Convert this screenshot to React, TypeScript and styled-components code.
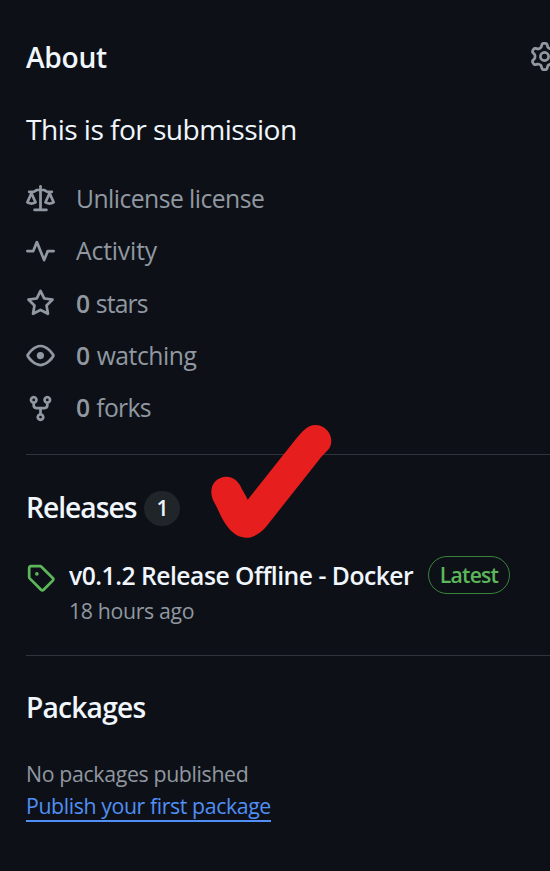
import React from 'react';
import styled, { createGlobalStyle } from 'styled-components';

const color = {
  bg: '#0d1117',
  text: '#f0f6fc',
  muted: '#9198a1',
  line: '#30353d',
  green: '#5cb75a',
  greenBorder: '#3a833c',
  link: '#508ff6',
  counter: '#1f2528',
  red: '#e61e1e',
};

const GlobalStyle = createGlobalStyle`
  *, *::before, *::after { box-sizing: border-box; }
  body {
    margin: 0;
    overflow: hidden;
    background: ${color.bg};
    color: ${color.text};
    font-family: 'Open Sans', 'Noto Sans', sans-serif;
  }
  h2, p, ul { margin: 0; padding: 0; }
`;

const Sidebar = styled.aside`
  position: relative;
  width: 550px;
  height: 871px;
  padding-left: 26px;
  overflow: hidden;
  background: ${color.bg};
`;

const Section = styled.section<{ $height: number; $top: number }>`
  height: ${({ $height }) => $height}px;
  padding-top: ${({ $top }) => $top}px;
  border-bottom: 1px solid ${color.line};

  &:last-of-type { border-bottom: 0; }
`;

const HeadingRow = styled.div`
  display: flex;
  align-items: center;
  height: 40px;
`;

const Heading = styled.h2<{ $spacing: number }>`
  font-size: 28.2px;
  font-weight: 600;
  line-height: 40px;
  letter-spacing: ${({ $spacing }) => $spacing}px;
  white-space: nowrap;
`;

const Icon = styled.svg`
  display: block;
  flex: none;
  width: 29px;
  height: 29px;
  fill: currentColor;
`;

const SettingsButton = styled.a`
  flex: none;
  margin: -1px -9px 0 auto;
  color: ${color.muted};
`;

const Description = styled.p`
  margin-top: 32px;
  font-size: 28.2px;
  line-height: 40px;
  letter-spacing: -0.57px;
`;

const MetaList = styled.ul`
  display: grid;
  grid-auto-rows: 52.25px;
  margin-top: 24px;
  list-style: none;
`;

const MetaItem = styled.li<{ $spacing: number }>`
  display: flex;
  align-items: center;
  gap: 21px;
  color: ${color.muted};
  font-size: 24.7px;
  line-height: 36px;
  letter-spacing: ${({ $spacing }) => $spacing}px;

  strong { margin-right: 1px; font-weight: 600; }
`;

const Counter = styled.span`
  display: grid;
  place-items: center;
  width: 36px;
  height: 35px;
  margin: 2px 0 0 8px;
  border-radius: 18px;
  background: ${color.counter};
  font-size: 21px;
  font-weight: 600;
  line-height: 34px;
`;

const Release = styled.div`
  display: grid;
  grid-template-columns: 29px 1fr;
  column-gap: 14px;
  margin-top: 29px;
`;

const TagIcon = styled(Icon)`
  margin-top: 7px;
  color: ${color.green};
`;

const ReleaseTitle = styled.div`
  display: flex;
  align-items: center;
  height: 38px;
  margin-bottom: 1px;
`;

const ReleaseName = styled.span`
  width: 359px;
  padding-top: 1px;
  font-size: 24.7px;
  font-weight: 600;
  line-height: 36px;
  letter-spacing: -0.5px;
  white-space: nowrap;
`;

const LatestLabel = styled.span`
  display: grid;
  place-items: center;
  width: 82px;
  height: 38px;
  padding-bottom: 2px;
  border: 1px solid ${color.greenBorder};
  border-radius: 19px;
  color: ${color.green};
  font-size: 21.2px;
  font-weight: 600;
  letter-spacing: -0.8px;
`;

const SmallText = styled.p<{ $spacing: number }>`
  color: ${color.muted};
  font-size: 21.3px;
  line-height: 32px;
  letter-spacing: ${({ $spacing }) => $spacing}px;
`;

const PackageInfo = styled.div`
  margin-top: 31px;
`;

const PublishLink = styled.a`
  display: block;
  width: 245px;
  height: 32px;
  border-bottom: 2px solid ${color.link};
  color: ${color.link};
  font-size: 21.3px;
  line-height: 32px;
  letter-spacing: -0.4px;
  white-space: nowrap;
`;

const CheckMark = styled.svg`
  position: absolute;
  left: 210px;
  top: 424px;
  width: 123px;
  height: 115px;
  fill: ${color.red};
`;

const paths = {
  gear: 'M8 0a8.2 8.2 0 0 1 .701.031C9.444.095 9.99.645 10.16 1.29l.288 1.107c.018.066.079.158.212.224.231.114.454.243.668.386.123.082.233.09.299.071l1.103-.303c.644-.176 1.392.021 1.82.63.27.385.506.792.704 1.218.315.675.111 1.422-.364 1.891l-.814.806c-.049.048-.098.147-.088.294.016.257.016.515 0 .772-.01.147.038.246.088.294l.814.806c.475.469.679 1.216.364 1.891a7.977 7.977 0 0 1-.704 1.217c-.428.61-1.176.807-1.82.63l-1.102-.302c-.067-.019-.177-.011-.3.071a5.909 5.909 0 0 1-.668.386c-.133.066-.194.158-.211.224l-.29 1.106c-.168.646-.715 1.196-1.458 1.26a8.006 8.006 0 0 1-1.402 0c-.743-.064-1.289-.614-1.458-1.26l-.289-1.106c-.018-.066-.079-.158-.212-.224a5.738 5.738 0 0 1-.668-.386c-.123-.082-.233-.09-.299-.071l-1.103.303c-.644.176-1.392-.021-1.82-.63a8.12 8.12 0 0 1-.704-1.218c-.315-.675-.111-1.422.363-1.891l.815-.806c.05-.048.098-.147.088-.294a6.214 6.214 0 0 1 0-.772c.01-.147-.038-.246-.088-.294l-.815-.806C.635 6.045.431 5.298.746 4.623a7.92 7.92 0 0 1 .704-1.217c.428-.61 1.176-.807 1.82-.63l1.102.302c.067.019.177.011.3-.071.214-.143.437-.272.668-.386.133-.066.194-.158.211-.224l.29-1.106C6.009.645 6.556.095 7.299.03 7.53.01 7.764 0 8 0Zm-.571 1.525c-.036.003-.108.036-.137.146l-.289 1.105c-.147.561-.549.967-.998 1.189-.173.086-.34.183-.5.29-.417.278-.97.423-1.529.27l-1.103-.303c-.109-.03-.175.016-.195.045-.22.312-.412.644-.573.99-.014.031-.021.11.059.19l.815.806c.411.406.562.957.53 1.456a4.709 4.709 0 0 0 0 .582c.032.499-.119 1.05-.53 1.456l-.815.806c-.081.08-.073.159-.059.19.162.346.353.677.573.989.02.03.085.076.195.046l1.102-.303c.56-.153 1.113-.008 1.53.27.161.107.328.204.501.29.447.222.85.629.997 1.189l.289 1.105c.029.109.101.143.137.146a6.6 6.6 0 0 0 1.142 0c.036-.003.108-.036.137-.146l.289-1.105c.147-.561.549-.967.998-1.189.173-.086.34-.183.5-.29.417-.278.97-.423 1.529-.27l1.103.303c.109.029.175-.016.195-.045.22-.313.411-.644.573-.99.014-.031.021-.11-.059-.19l-.815-.806c-.411-.406-.562-.957-.53-1.456a4.709 4.709 0 0 0 0-.582c-.032-.499.119-1.05.53-1.456l.815-.806c.081-.08.073-.159.059-.19a6.464 6.464 0 0 0-.573-.989c-.02-.03-.085-.076-.195-.046l-1.102.303c-.56.153-1.113.008-1.53-.27a4.44 4.44 0 0 0-.501-.29c-.447-.222-.85-.629-.997-1.189l-.289-1.105c-.029-.11-.101-.143-.137-.146a6.6 6.6 0 0 0-1.142 0ZM11 8a3 3 0 1 1-6 0 3 3 0 0 1 6 0ZM9.5 8a1.5 1.5 0 1 0-3.001.001A1.5 1.5 0 0 0 9.5 8Z',
  law: 'M8.75.75V2h.985c.304 0 .603.08.867.231l1.29.736c.038.022.08.033.124.033h2.234a.75.75 0 0 1 0 1.5h-.427l2.111 4.692a.75.75 0 0 1-.154.838l-.53-.53.529.531-.001.002-.002.002-.006.006-.006.005-.01.01-.045.04c-.21.176-.441.327-.686.45C14.556 10.78 13.88 11 13 11a4.498 4.498 0 0 1-2.023-.454 3.544 3.544 0 0 1-.686-.45l-.045-.04-.016-.015-.006-.006-.004-.004v-.001a.75.75 0 0 1-.154-.838L12.178 4.5h-.162c-.305 0-.604-.079-.868-.231l-1.29-.736a.245.245 0 0 0-.124-.033H8.75V13h2.5a.75.75 0 0 1 0 1.5h-6.5a.75.75 0 0 1 0-1.5h2.5V3.5h-.984a.245.245 0 0 0-.124.033l-1.289.737c-.265.15-.564.23-.869.23h-.162l2.112 4.692a.75.75 0 0 1-.154.838l-.53-.53.529.531-.001.002-.002.002-.006.006-.016.015-.045.04c-.21.176-.441.327-.686.45C4.556 10.78 3.88 11 3 11a4.498 4.498 0 0 1-2.023-.454 3.544 3.544 0 0 1-.686-.45l-.045-.04-.016-.015-.006-.006-.004-.004v-.001a.75.75 0 0 1-.154-.838L2.178 4.5H1.75a.75.75 0 0 1 0-1.5h2.234a.249.249 0 0 0 .125-.033l1.288-.737c.265-.15.564-.23.869-.23h.984V.75a.75.75 0 0 1 1.5 0Zm2.945 8.477c.285.135.718.273 1.305.273s1.02-.138 1.305-.273L13 6.327Zm-10 0c.285.135.718.273 1.305.273s1.02-.138 1.305-.273L3 6.327Z',
  pulse: 'M6 2c.306 0 .582.187.696.471L10 10.731l1.304-3.26A.751.751 0 0 1 12 7h3.25a.75.75 0 0 1 0 1.5h-2.742l-1.812 4.528a.751.751 0 0 1-1.392 0L6 4.77 4.696 8.03A.75.75 0 0 1 4 8.5H.75a.75.75 0 0 1 0-1.5h2.742l1.812-4.529A.751.751 0 0 1 6 2Z',
  star: 'M8 .25a.75.75 0 0 1 .673.418l1.882 3.815 4.21.612a.75.75 0 0 1 .416 1.279l-3.046 2.97.719 4.192a.751.751 0 0 1-1.088.791L8 12.347l-3.766 1.98a.75.75 0 0 1-1.088-.79l.72-4.194L.818 6.374a.75.75 0 0 1 .416-1.28l4.21-.611L7.327.668A.75.75 0 0 1 8 .25Zm0 2.445L6.615 5.5a.75.75 0 0 1-.564.41l-3.097.45 2.24 2.184a.75.75 0 0 1 .216.664l-.528 3.084 2.769-1.456a.75.75 0 0 1 .698 0l2.77 1.456-.53-3.084a.75.75 0 0 1 .216-.664l2.24-2.183-3.096-.45a.75.75 0 0 1-.564-.41L8 2.694Z',
  eye: 'M8 2c1.981 0 3.671.992 4.933 2.078 1.27 1.091 2.187 2.345 2.637 3.023a1.62 1.62 0 0 1 0 1.798c-.45.678-1.367 1.932-2.637 3.023C11.67 13.008 9.981 14 8 14c-1.981 0-3.671-.992-4.933-2.078C1.797 10.83.88 9.576.43 8.898a1.62 1.62 0 0 1 0-1.798c.45-.677 1.367-1.931 2.637-3.022C4.33 2.992 6.019 2 8 2ZM1.679 7.932a.12.12 0 0 0 0 .136c.411.622 1.241 1.75 2.366 2.717C5.176 11.758 6.527 12.5 8 12.5c1.473 0 2.825-.742 3.955-1.715 1.124-.967 1.954-2.096 2.366-2.717a.12.12 0 0 0 0-.136c-.412-.621-1.242-1.75-2.366-2.717C10.824 4.242 9.473 3.5 8 3.5c-1.473 0-2.825.742-3.955 1.715-1.124.967-1.954 2.096-2.366 2.717ZM8 10a2 2 0 1 1-.001-3.999A2 2 0 0 1 8 10Z',
  fork: 'M5 5.372v.878c0 .414.336.75.75.75h4.5a.75.75 0 0 0 .75-.75v-.878a2.25 2.25 0 1 1 1.5 0v.878a2.25 2.25 0 0 1-2.25 2.25h-1.5v2.128a2.251 2.251 0 1 1-1.5 0V8.5h-1.5A2.25 2.25 0 0 1 3.5 6.25v-.878a2.25 2.25 0 1 1 1.5 0ZM5 3.25a.75.75 0 1 0-1.5 0 .75.75 0 0 0 1.5 0Zm6.75.75a.75.75 0 1 0 0-1.5.75.75 0 0 0 0 1.5Zm-3 8.75a.75.75 0 1 0-1.5 0 .75.75 0 0 0 1.5 0Z',
  tag: 'M1 7.775V2.75C1 1.784 1.784 1 2.75 1h5.025c.464 0 .91.184 1.238.513l6.25 6.25a1.75 1.75 0 0 1 0 2.474l-5.026 5.026a1.75 1.75 0 0 1-2.474 0l-6.25-6.25A1.752 1.752 0 0 1 1 7.775Zm1.5 0c0 .066.026.13.073.177l6.25 6.25a.25.25 0 0 0 .354 0l5.025-5.025a.25.25 0 0 0 0-.354l-6.25-6.25a.25.25 0 0 0-.177-.073H2.75a.25.25 0 0 0-.25.25ZM6 5a1 1 0 1 1 0 2 1 1 0 0 1 0-2Z',
};

const meta: { icon: keyof typeof paths; count?: number; label: string; spacing: number }[] = [
  { icon: 'law', label: 'Unlicense license', spacing: -0.54 },
  { icon: 'pulse', label: 'Activity', spacing: -0.15 },
  { icon: 'star', count: 0, label: 'stars', spacing: -0.85 },
  { icon: 'eye', count: 0, label: 'watching', spacing: -0.45 },
  { icon: 'fork', count: 0, label: 'forks', spacing: -0.65 },
];

export default function App() {
  return (
    <>
      <GlobalStyle />
      <Sidebar>
        <Section $height={455} $top={37}>
          <HeadingRow>
            <Heading $spacing={-0.3}>About</Heading>
            <SettingsButton aria-label="Settings">
              <Icon viewBox="0 0 16 16"><path d={paths.gear} /></Icon>
            </SettingsButton>
          </HeadingRow>
          <Description>This is for submission</Description>
          <MetaList>
            {meta.map(({ icon, count, label, spacing }) => (
              <MetaItem key={label} $spacing={spacing}>
                <Icon viewBox="0 0 16 16"><path d={paths[icon]} /></Icon>
                <span>
                  {count !== undefined && <><strong>{count}</strong>{' '}</>}
                  {label}
                </span>
              </MetaItem>
            ))}
          </MetaList>
        </Section>

        <Section $height={201} $top={32}>
          <HeadingRow>
            <Heading $spacing={-1}>Releases</Heading>
            <Counter>1</Counter>
          </HeadingRow>
          <Release>
            <TagIcon viewBox="0 0 16 16"><path d={paths.tag} /></TagIcon>
            <div>
              <ReleaseTitle>
                <ReleaseName>v0.1.2 Release Offline - Docker</ReleaseName>
                <LatestLabel>Latest</LatestLabel>
              </ReleaseTitle>
              <SmallText $spacing={-0.35}>18 hours ago</SmallText>
            </div>
          </Release>
        </Section>

        <Section $height={215} $top={31}>
          <HeadingRow>
            <Heading $spacing={-0.8}>Packages</Heading>
          </HeadingRow>
          <PackageInfo>
            <SmallText $spacing={-0.35}>No packages published</SmallText>
            <PublishLink>Publish your first package</PublishLink>
          </PackageInfo>
        </Section>

        <CheckMark viewBox="210 424 123 115">
          <path d="M315.5 425C324 425 331.3 432 331.3 441C331.3 445 330 448 327.5 450.5C324 454 321 457 318.3 460.7L266.7 526C261 533 254 537.7 246 537.7C237 537.7 230 531 225 523.3C221 517 219 511.5 216.2 506C213.5 501.5 211.3 497 211.3 492C211.3 483 218 476.7 226.3 476.7C233 476.7 238 481 240.7 486.5C242 490 245 493.5 247.7 499.7L295.7 439.3C302 432 307 425 315.5 425Z" />
        </CheckMark>
      </Sidebar>
    </>
  );
}
